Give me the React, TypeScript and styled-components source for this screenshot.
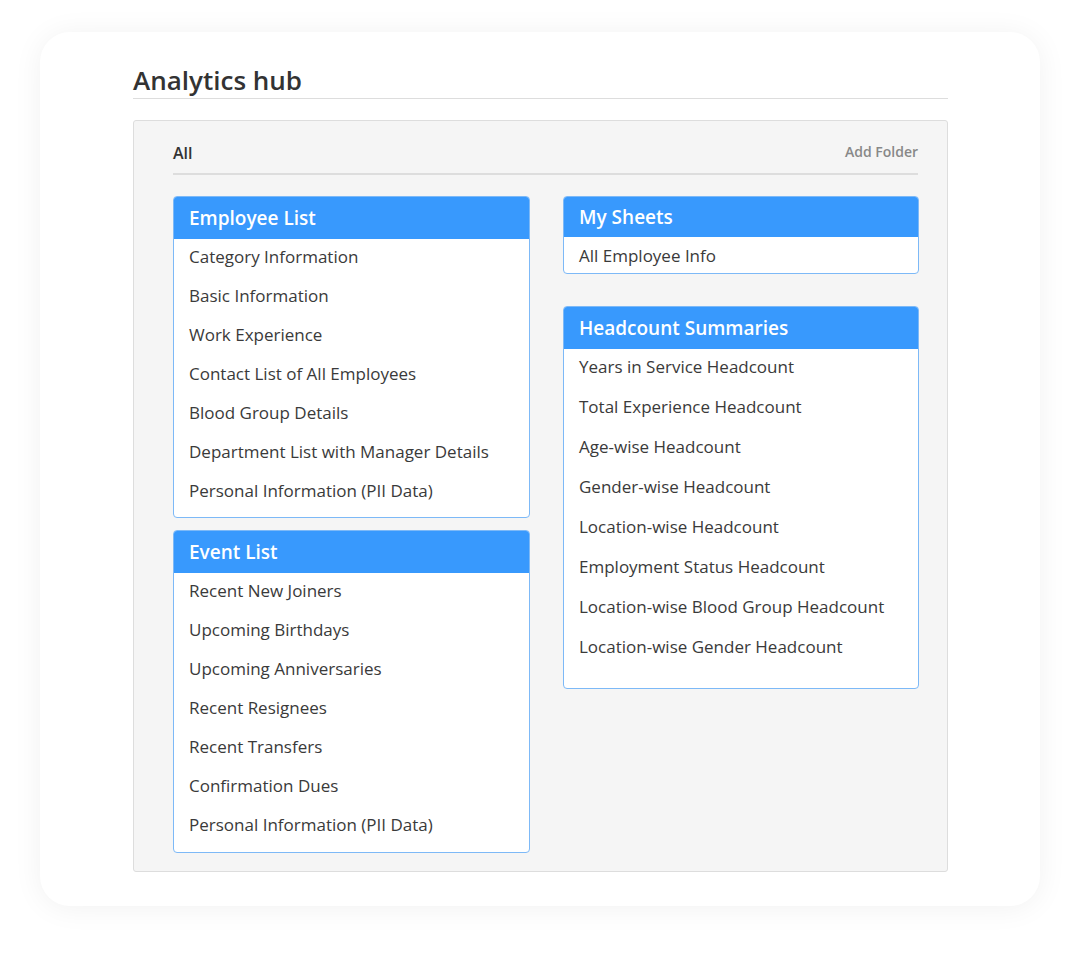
import React from 'react';
import styled, { createGlobalStyle } from 'styled-components';

const GlobalStyle = createGlobalStyle`
  body {
    margin: 0;
    background: #fff;
    font-family: 'Open Sans', 'Noto Sans', sans-serif;
  }
`;

interface Section {
  title: string;
  items: string[];
  headerHeight: number;
  rowHeight: number;
  listShift: number;
  padBottom: number;
}

const leftSections: Section[] = [
  {
    title: 'Employee List',
    headerHeight: 42,
    rowHeight: 39,
    listShift: -2,
    padBottom: 7,
    items: [
      'Category Information',
      'Basic Information',
      'Work Experience',
      'Contact List of All Employees',
      'Blood Group Details',
      'Department List with Manager Details',
      'Personal Information (PII Data)',
    ],
  },
  {
    title: 'Event List',
    headerHeight: 42,
    rowHeight: 39,
    listShift: -2,
    padBottom: 8,
    items: [
      'Recent New Joiners',
      'Upcoming Birthdays',
      'Upcoming Anniversaries',
      'Recent Resignees',
      'Recent Transfers',
      'Confirmation Dues',
      'Personal Information (PII Data)',
    ],
  },
];

const rightSections: Section[] = [
  {
    title: 'My Sheets',
    headerHeight: 40,
    rowHeight: 36,
    listShift: 0,
    padBottom: 0,
    items: ['All Employee Info'],
  },
  {
    title: 'Headcount Summaries',
    headerHeight: 42,
    rowHeight: 40,
    listShift: -3,
    padBottom: 22,
    items: [
      'Years in Service Headcount',
      'Total Experience Headcount',
      'Age-wise Headcount',
      'Gender-wise Headcount',
      'Location-wise Headcount',
      'Employment Status Headcount',
      'Location-wise Blood Group Headcount',
      'Location-wise Gender Headcount',
    ],
  },
];

const Page = styled.div`
  padding: 32px 40px 52px;
`;

const Card = styled.div`
  background: #fff;
  border-radius: 30px;
  box-shadow: 0 2px 30px rgba(0, 0, 0, 0.06);
  padding: 33px 92px 34px 93px;
`;

const Title = styled.h1`
  margin: 0;
  font-size: 26px;
  font-weight: 600;
  color: #333;
  line-height: 30px;
  padding-bottom: 3px;
  border-bottom: 1px solid #ddd;
`;

const Panel = styled.div`
  margin-top: 21px;
  background: #f5f5f5;
  border: 1px solid #ddd;
  border-radius: 3px;
  padding: 15px 29px 18px 39px;
`;

const TabBar = styled.div`
  display: flex;
  justify-content: space-between;
  align-items: center;
  height: 33px;
  padding-bottom: 4px;
  border-bottom: 2px solid #ddd;
  margin-bottom: 21px;
`;

const Tab = styled.span`
  font-size: 16px;
  font-weight: 600;
  color: #333;
`;

const AddFolder = styled.span`
  font-size: 14px;
  font-weight: 600;
  color: #888;
  margin-top: -2px;
`;

const Columns = styled.div`
  display: grid;
  grid-template-columns: 357px 356px;
  column-gap: 33px;
  align-items: start;
`;

const Column = styled.div<{ $gap: number }>`
  display: flex;
  flex-direction: column;
  gap: ${(p) => p.$gap}px;
`;

const Box = styled.div<{ $padBottom: number }>`
  background: #fff;
  border: 1px solid #7db9f7;
  border-radius: 4px;
  overflow: hidden;
  padding-bottom: ${(p) => p.$padBottom}px;
`;

const BoxHeader = styled.div<{ $height: number }>`
  position: relative;
  z-index: 1;
  height: ${(p) => p.$height}px;
  background: #3899fd;
  color: #fff;
  font-size: 19px;
  font-weight: 600;
  display: flex;
  align-items: center;
  padding: 0 15px;
`;

const List = styled.div<{ $shift: number }>`
  margin-top: ${(p) => p.$shift}px;
`;

const Item = styled.div<{ $height: number }>`
  height: ${(p) => p.$height}px;
  display: flex;
  align-items: center;
  padding: 0 15px;
  font-size: 17px;
  color: #3a3a3a;
  white-space: nowrap;
`;

const SectionBox = ({ section }: { section: Section }) => (
  <Box $padBottom={section.padBottom}>
    <BoxHeader $height={section.headerHeight}>{section.title}</BoxHeader>
    <List $shift={section.listShift}>
      {section.items.map((item) => (
        <Item key={item} $height={section.rowHeight}>
          {item}
        </Item>
      ))}
    </List>
  </Box>
);

export default function App() {
  return (
    <>
      <GlobalStyle />
      <Page>
        <Card>
          <Title>Analytics hub</Title>
          <Panel>
            <TabBar>
              <Tab>All</Tab>
              <AddFolder>Add Folder</AddFolder>
            </TabBar>
            <Columns>
              <Column $gap={12}>
                {leftSections.map((s) => (
                  <SectionBox key={s.title} section={s} />
                ))}
              </Column>
              <Column $gap={32}>
                {rightSections.map((s) => (
                  <SectionBox key={s.title} section={s} />
                ))}
              </Column>
            </Columns>
          </Panel>
        </Card>
      </Page>
    </>
  );
}
